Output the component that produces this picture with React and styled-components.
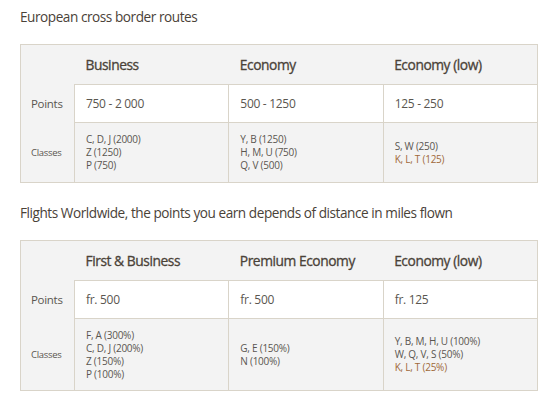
import React from 'react';
import styled, { createGlobalStyle } from 'styled-components';

const colors = {
  text: '#4a4238',
  body: '#5a5650',
  border: '#d9d4c9',
  shade: '#f3f3f3',
  white: '#ffffff',
  accent: '#a0693a'
};

const GlobalStyle = createGlobalStyle`
  body {
    margin: 0;
    background: ${colors.white};
    font-family: "Open Sans", Lato, sans-serif;
    color: ${colors.text};
  }
`;

const Page = styled.div`
  padding: 7px 10px 0 20px;
  width: 518px;
`;

const Title = styled.h2`
  margin: 0;
  font-size: 13.6px;
  font-weight: 400;
  letter-spacing: -0.45px;
  line-height: 20px;
  color: ${colors.text};
`;

const Section = styled.section`
  display: flex;
  flex-direction: column;
  gap: 17px;
  margin-bottom: 20px;
`;

const Table = styled.table`
  width: 518px;
  border-collapse: collapse;
  table-layout: fixed;
  border: 1px solid ${colors.border};
  background: ${colors.shade};
`;

const HeadCell = styled.th`
  height: 39px;
  padding: 0 11px;
  text-align: left;
  font-size: 13.8px;
  font-weight: 400;
  letter-spacing: -0.45px;
  -webkit-text-stroke: 0.3px ${colors.text};
  color: ${colors.text};
  vertical-align: middle;
`;

const Label = styled.td`
  padding: 0 10px;
  font-size: ${p => (p.small ? '9.5px' : '11.5px')};
  letter-spacing: -0.3px;
  color: ${colors.body};
  vertical-align: middle;
`;

const ValueCell = styled.td`
  height: ${p => p.h}px;
  padding: 0 11px;
  font-size: 12px;
  letter-spacing: -0.3px;
  color: ${colors.body};
  background: ${colors.white};
  border-left: 1px solid ${colors.border};
  border-top: 1px solid ${colors.border};
  vertical-align: middle;
`;

const ClassCell = styled(ValueCell)`
  background: ${colors.shade};
  font-size: 10px;
  letter-spacing: -0.25px;
  line-height: 13px;
`;

const ClassLine = styled.div`
  color: ${p => (p.accent ? colors.accent : colors.body)};
`;

const FareTable = ({ columns, classesHeight }) => (
  <Table>
    <colgroup>
      <col style={{ width: 54 }} />
      <col />
      <col />
      <col />
    </colgroup>
    <thead>
      <tr>
        <HeadCell />
        {columns.map(c => (
          <HeadCell key={c.name}>{c.name}</HeadCell>
        ))}
      </tr>
    </thead>
    <tbody>
      <tr>
        <Label>Points</Label>
        {columns.map(c => (
          <ValueCell key={c.name} h={37}>
            {c.points}
          </ValueCell>
        ))}
      </tr>
      <tr>
        <Label small>Classes</Label>
        {columns.map(c => (
          <ClassCell key={c.name} h={classesHeight}>
            {c.classes.map(line => (
              <ClassLine key={line} accent={line.startsWith('K, L, T')}>
                {line}
              </ClassLine>
            ))}
          </ClassCell>
        ))}
      </tr>
    </tbody>
  </Table>
);

const european = [
  { name: 'Business', points: '750 - 2 000', classes: ['C, D, J (2000)', 'Z (1250)', 'P (750)'] },
  { name: 'Economy', points: '500 - 1250', classes: ['Y, B (1250)', 'H, M, U (750)', 'Q, V (500)'] },
  { name: 'Economy (low)', points: '125 - 250', classes: ['S, W (250)', 'K, L, T (125)'] }
];

const worldwide = [
  {
    name: 'First & Business',
    points: 'fr. 500',
    classes: ['F, A (300%)', 'C, D, J (200%)', 'Z (150%)', 'P (100%)']
  },
  { name: 'Premium Economy', points: 'fr. 500', classes: ['G, E (150%)', 'N (100%)'] },
  {
    name: 'Economy (low)',
    points: 'fr. 125',
    classes: ['Y, B, M, H, U (100%)', 'W, Q, V, S (50%)', 'K, L, T (25%)']
  }
];

export default function App() {
  return (
    <Page>
      <GlobalStyle />
      <Section>
        <Title>European cross border routes</Title>
        <FareTable columns={european} classesHeight={59} />
      </Section>
      <Section>
        <Title>Flights Worldwide, the points you earn depends of distance in miles flown</Title>
        <FareTable columns={worldwide} classesHeight={71} />
      </Section>
    </Page>
  );
}
